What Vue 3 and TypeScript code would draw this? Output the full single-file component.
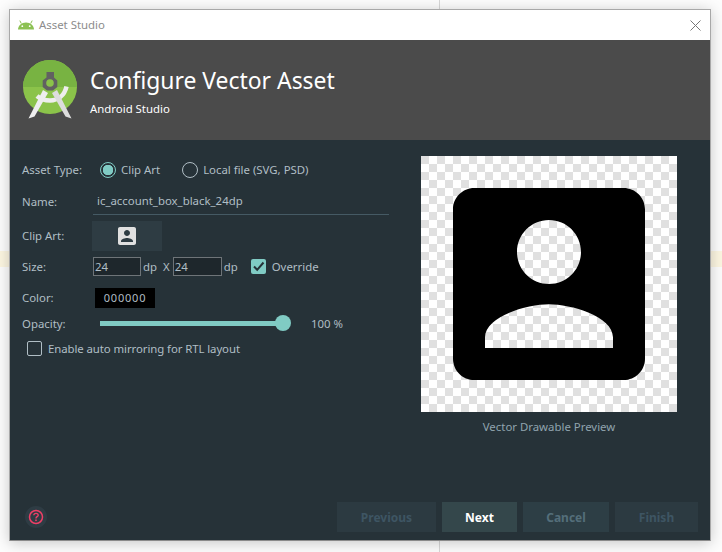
<template>
  <div class="desk">
    <div class="rule"></div>
    <div class="band"></div>
    <div class="window">
      <div class="titlebar">
        <svg class="droid" viewBox="0 0 16 10" width="16" height="10">
          <path d="M0 9.5C.2 5.6 3.5 2.6 8 2.6s7.800 3 8 6.900z" fill="#8cc152" />
          <path d="M3.300 3.500L1.800 .6M12.700 3.500L14.200 .6" stroke="#8cc152" stroke-width="1" />
          <circle cx="4.300" cy="6.200" r=".9" fill="#fff" />
          <circle cx="11.700" cy="6.200" r=".9" fill="#fff" />
        </svg>
        <span class="title">Asset Studio</span>
        <svg class="close" viewBox="0 0 11 11" width="11" height="11">
          <path d="M.5 .5l10 10M10.500 .5l-10 10" stroke="#777" stroke-width="1" fill="none" />
        </svg>
      </div>

      <div class="header">
        <svg class="logo" viewBox="0 0 60 64" width="60" height="64">
          <circle cx="30" cy="28" r="27" fill="#8bc34a" />
          <path d="M3 28a27 27 0 0 1 54 0z" fill="#78b342" />
          <path d="M17 37c4 3.500 8 4.500 13 4.500 8 0 14.500-5 16.500-14" fill="none" stroke="#eee" stroke-width="4.500" />
          <path d="M23 31L8.500 59.500 14.500 57.500 28 34z" fill="#eee" />
          <path d="M37 31L51.500 59.500 45.500 57.500 32 34z" fill="#ddd" />
          <path d="M26.500 13H34v5.500l3.300 3V28L33 31.500h-6L22.700 28v-6.500l3.800-3z" fill="#616161" />
          <circle cx="30" cy="24" r="3.800" fill="#8bc34a" />
        </svg>
        <div class="heading">
          <div class="heading-main">Configure Vector Asset</div>
          <div class="heading-sub">Android Studio</div>
        </div>
      </div>

      <div class="body">
        <div class="content">
          <div class="form">
            <div class="row type-row">
              <span class="label">Asset Type:</span>
              <span class="radio on"></span>
              <span class="radio-text">Clip Art</span>
              <span class="radio"></span>
              <span class="radio-text">Local file (SVG, PSD)</span>
            </div>
            <div class="row name-row">
              <span class="label">Name:</span>
              <div class="name-input">ic_account_box_black_24dp</div>
            </div>
            <div class="row art-row">
              <span class="label">Clip Art:</span>
              <div class="art-button">
                <svg viewBox="3 3 18 18" width="18" height="18">
                  <path fill="#e0e0e0" fill-rule="evenodd" :d="iconPath" />
                </svg>
              </div>
            </div>
            <div class="row size-row">
              <span class="label">Size:</span>
              <span class="num">24</span>
              <span class="unit">dp</span>
              <span class="by">X</span>
              <span class="num wide">24</span>
              <span class="unit">dp</span>
              <span class="check on">
                <svg viewBox="0 0 15 15" width="15" height="15">
                  <path d="M3 7.500l3.200 3.300L12.500 3.500" fill="none" stroke="#263238" stroke-width="2" />
                </svg>
              </span>
              <span class="check-text">Override</span>
            </div>
            <div class="row color-row">
              <span class="label">Color:</span>
              <div class="swatch">000000</div>
            </div>
            <div class="row opacity-row">
              <span class="label">Opacity:</span>
              <div class="slider"><span class="thumb"></span></div>
              <span class="percent">100 %</span>
            </div>
            <div class="row rtl-row">
              <span class="check"></span>
              <span class="check-text rtl-text">Enable auto mirroring for RTL layout</span>
            </div>
          </div>

          <div class="preview">
            <div class="checker">
              <svg viewBox="0 0 24 24" width="256" height="256">
                <path fill="#000" fill-rule="evenodd" :d="iconPath" />
              </svg>
            </div>
            <div class="caption">Vector Drawable Preview</div>
          </div>
        </div>

        <div class="footer">
          <div class="help">
            <svg viewBox="0 0 16 16" width="16" height="16">
              <circle cx="8" cy="8" r="6.500" fill="none" stroke="#ee3f66" stroke-width="1.500" />
              <path d="M5.800 6.300C5.900 5 6.800 4.400 8 4.400s2.200.7 2.200 1.800c0 1.500-2.200 1.500-2.200 3.200" fill="none" stroke="#ee3f66" stroke-width="1.400" />
              <rect x="7.200" y="10.500" width="1.600" height="1.600" fill="#ee3f66" />
            </svg>
          </div>
          <div class="buttons">
            <button v-for="b in buttons" :key="b.text" :class="['btn', b.kind]" :style="{ width: b.width + 'px' }">
              {{ b.text }}
            </button>
          </div>
        </div>
      </div>
    </div>
  </div>
</template>

<script setup lang="ts">
const iconPath =
  'M3 5v14c0 1.100.89 2 2 2h14c1.100 0 2-.9 2-2V5c0-1.100-.9-2-2-2H5c-1.110 0-2 .9-2 2zm12 4c0 1.660-1.340 3-3 3s-3-1.340-3-3 1.340-3 3-3 3 1.340 3 3zm-9 8c0-2 4-3.100 6-3.100s6 1.100 6 3.100v1H6v-1z'

const buttons = [
  { text: 'Previous', kind: 'off', width: 99 },
  { text: 'Next', kind: 'default', width: 75 },
  { text: 'Cancel', kind: 'normal', width: 86 },
  { text: 'Finish', kind: 'off', width: 83 },
]
</script>

<style>
html,
body {
  margin: 0;
  background: #fff;
}
</style>

<style scoped>
.desk {
  position: relative;
  width: 722px;
  height: 552px;
  padding: 9px 0 0 9px;
  box-sizing: border-box;
  overflow: hidden;
  background: #fdfdfd;
  font-family: "Noto Sans", sans-serif;
  font-size: 11.4px;
}

.rule {
  position: absolute;
  left: 439px;
  top: 0;
  width: 1px;
  height: 552px;
  background: #d8d8d8;
}

.band {
  position: absolute;
  left: 0;
  top: 251px;
  width: 722px;
  height: 16px;
  background: #fdf7e2;
}

.window {
  position: relative;
  width: 702px;
  height: 532px;
  box-sizing: border-box;
  border: 1px solid #a8a8a8;
  border-bottom-color: #8a8a8a;
  box-shadow: 0 2px 14px rgba(0, 0, 0, 0.22);
  display: flex;
  flex-direction: column;
}

.titlebar {
  height: 30px;
  background: #fff;
  display: flex;
  align-items: center;
  padding: 0 9px 0 8px;
  flex: none;
}

.droid {
  margin-right: 5px;
}

.title {
  color: #8c8c8c;
  flex: 1;
  margin-bottom: 1px;
}

.header {
  height: 100px;
  flex: none;
  background: #4b4b4b;
  display: flex;
  padding-left: 10px;
  box-sizing: border-box;
  color: #fff;
}

.logo {
  margin-top: 19px;
}

.heading {
  margin-left: 10px;
  padding-top: 24px;
}

.heading-main {
  font-size: 22.9px;
  line-height: 34px;
}

.heading-sub {
  font-size: 11.4px;
  line-height: 16px;
  margin-top: 3px;
}

.body {
  flex: 1;
  background: #263238;
  color: #b0bec5;
  display: flex;
  flex-direction: column;
}

.content {
  flex: 1;
  display: flex;
  padding: 16px 0 0 12px;
}

.form {
  width: 367px;
  flex: none;
}

.row {
  display: flex;
  align-items: center;
}

.label {
  width: 70px;
  flex: none;
}

.type-row {
  height: 27px;
}

.radio {
  width: 14px;
  height: 14px;
  border: 1px solid #b0bec5;
  border-radius: 50%;
  flex: none;
  margin-right: 5px;
  margin-left: 8px;
  position: relative;
}

.radio.on {
  border-color: #80cbc4;
  background: radial-gradient(circle, #80cbc4 0 5px, transparent 5.500px);
}

.radio-text {
  margin-right: 14px;
}

.name-row {
  height: 28px;
  margin-top: 4px;
}

.name-input {
  margin-left: 1px;
  width: 292px;
  height: 27px;
  line-height: 27px;
  padding-left: 4px;
  border-bottom: 1px solid #455a64;
}

.art-row {
  margin-top: 5px;
  height: 31px;
}

.art-button {
  width: 70px;
  height: 30px;
  background: #2e3c43;
  display: flex;
  align-items: center;
  justify-content: center;
}

.size-row {
  margin-top: 5px;
  height: 20px;
}

.num {
  width: 45px;
  height: 17px;
  line-height: 17px;
  margin-left: 1px;
  padding-left: 1px;
  border: 1px solid #6e7478;
  background: #1e272c;
}

.num.wide {
  width: 46px;
}

.unit {
  margin-left: 2px;
}

.by {
  margin: 0 2px 0 6px;
}

.size-row .check {
  margin-left: 13px;
}

.check {
  width: 13px;
  height: 13px;
  border: 1px solid #b0bec5;
  border-radius: 2px;
  flex: none;
}

.check.on {
  width: 15px;
  height: 15px;
  border: 0;
  background: #80cbc4;
}

.check.on svg {
  display: block;
}

.check-text {
  margin-left: 6px;
}

.rtl-text {
  letter-spacing: -0.08px;
}

.color-row {
  margin-top: 11px;
  height: 21px;
}

.swatch {
  margin-left: 3px;
  width: 60px;
  height: 20px;
  line-height: 20px;
  background: #000;
  text-align: center;
  letter-spacing: 0.8px;
  font-size: 11px;
}

.opacity-row {
  margin-top: 4px;
  height: 22px;
}

.slider {
  position: relative;
  margin-left: 8px;
  width: 183px;
  height: 5px;
  background: #80cbc4;
}

.thumb {
  position: absolute;
  right: -8px;
  top: -5.500px;
  width: 16px;
  height: 16px;
  border-radius: 50%;
  background: #80cbc4;
}

.percent {
  margin-left: 28px;
}

.rtl-row {
  margin-top: 4px;
  height: 20px;
  padding-left: 5px;
}

.preview {
  margin-left: 32px;
  width: 256px;
  text-align: center;
}

.checker {
  width: 256px;
  height: 256px;
  background-color: #fff;
  background-image: linear-gradient(45deg, #e0e0e0 25%, transparent 25%, transparent 75%, #e0e0e0 75%),
    linear-gradient(45deg, #e0e0e0 25%, transparent 25%, transparent 75%, #e0e0e0 75%);
  background-size: 16px 16px;
  background-position: 8px 0, 0 8px;
}

.checker svg {
  display: block;
}

.caption {
  margin-top: 6px;
  line-height: 17px;
  color: #90a4ae;
}

.footer {
  display: flex;
  align-items: center;
  height: 30px;
  padding: 0 12px 8px 15px;
}

.help {
  width: 22px;
  height: 22px;
  border-radius: 50%;
  background: #2e3c44;
  display: flex;
  align-items: center;
  justify-content: center;
}

.buttons {
  margin-left: auto;
  display: flex;
  gap: 6px;
}

.btn {
  height: 30px;
  padding: 0;
  border: 0;
  font-family: inherit;
  font-size: 12px;
  font-weight: 700;
}

.btn.off {
  background: #2c3a41;
  color: #3e5563;
}

.btn.default {
  background: #34474b;
  color: #fff;
}

.btn.normal {
  background: #2d3e45;
  color: #546e7a;
}
</style>
